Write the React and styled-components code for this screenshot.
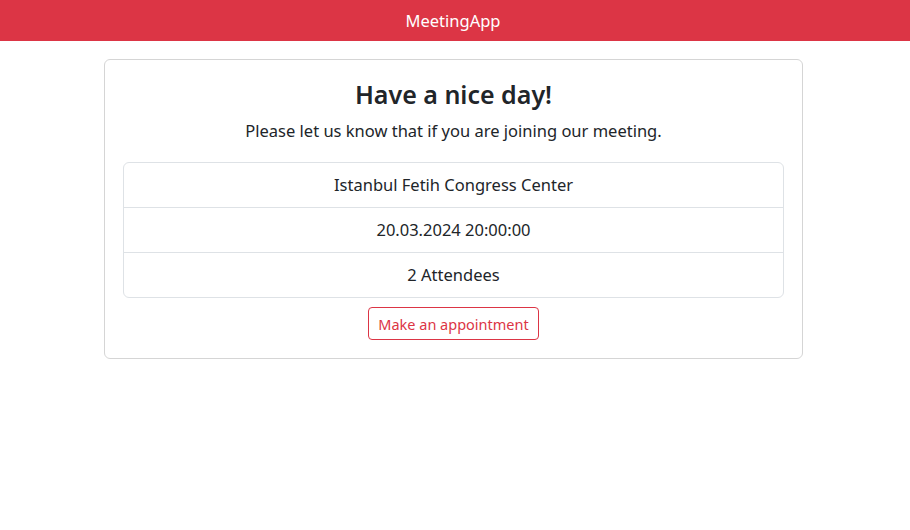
import React from 'react';
import styled, { createGlobalStyle } from 'styled-components';

const GlobalStyle = createGlobalStyle`
    body {
        margin: 0;
        font-family: "Noto Sans", "Open Sans", sans-serif;
        color: #212529;
        background: #fff;
    }
`

export const Navbar = styled.header`
    height: 41px;
    background: #dc3545;
    display: flex;
    align-items: center;
    justify-content: center;
    padding-right: 4px;
`

export const Brand = styled.a`
    color: white;
    font-size: 16.5px;
    text-decoration: none;
`

export const Container = styled.main`
    width: 699px;
    margin: 18px 0 0 calc(50% - 351px);
`

export const Card = styled.section`
    border: 1px solid #d5d5d5;
    border-radius: 6px;
    padding: 19px 18px 18px;
    display: flex;
    flex-direction: column;
    align-items: center;
`

export const Title = styled.h3`
    margin: 0;
    font-size: 25px;
    line-height: 30px;
    font-weight: 600;
`

export const Lead = styled.p`
    margin: 8px 0 0;
    font-size: 16.5px;
    line-height: 27px;
`

export const List = styled.ul`
    list-style: none;
    margin: 18px 0 0;
    padding: 0;
    align-self: stretch;
    border: 1px solid #dee2e6;
    border-radius: 6px;
`

export const Item = styled.li`
    padding: 8px 16px;
    font-size: 16.5px;
    line-height: 28px;
    text-align: center;

    & + & {
        border-top: 1px solid #dee2e6;
    }
`

export const Button = styled.button`
    margin-top: 9px;
    height: 33px;
    padding: 0 9px;
    background: transparent;
    border: 1px solid #dc3545;
    border-radius: 4px;
    color: #dc3545;
    font-family: inherit;
    font-size: 14.5px;
    cursor: pointer;
`

const meeting = {
    place: 'Istanbul Fetih Congress Center',
    date: '20.03.2024 20:00:00',
    attendees: 2,
}

const App = () => (
    <>
        <GlobalStyle/>
        <Navbar>
            <Brand href="#">MeetingApp</Brand>
        </Navbar>
        <Container>
            <Card>
                <Title>Have a nice day!</Title>
                <Lead>Please let us know that if you are joining our meeting.</Lead>
                <List>
                    <Item>{meeting.place}</Item>
                    <Item>{meeting.date}</Item>
                    <Item>{meeting.attendees} Attendees</Item>
                </List>
                <Button>Make an appointment</Button>
            </Card>
        </Container>
    </>
);

export default App;
